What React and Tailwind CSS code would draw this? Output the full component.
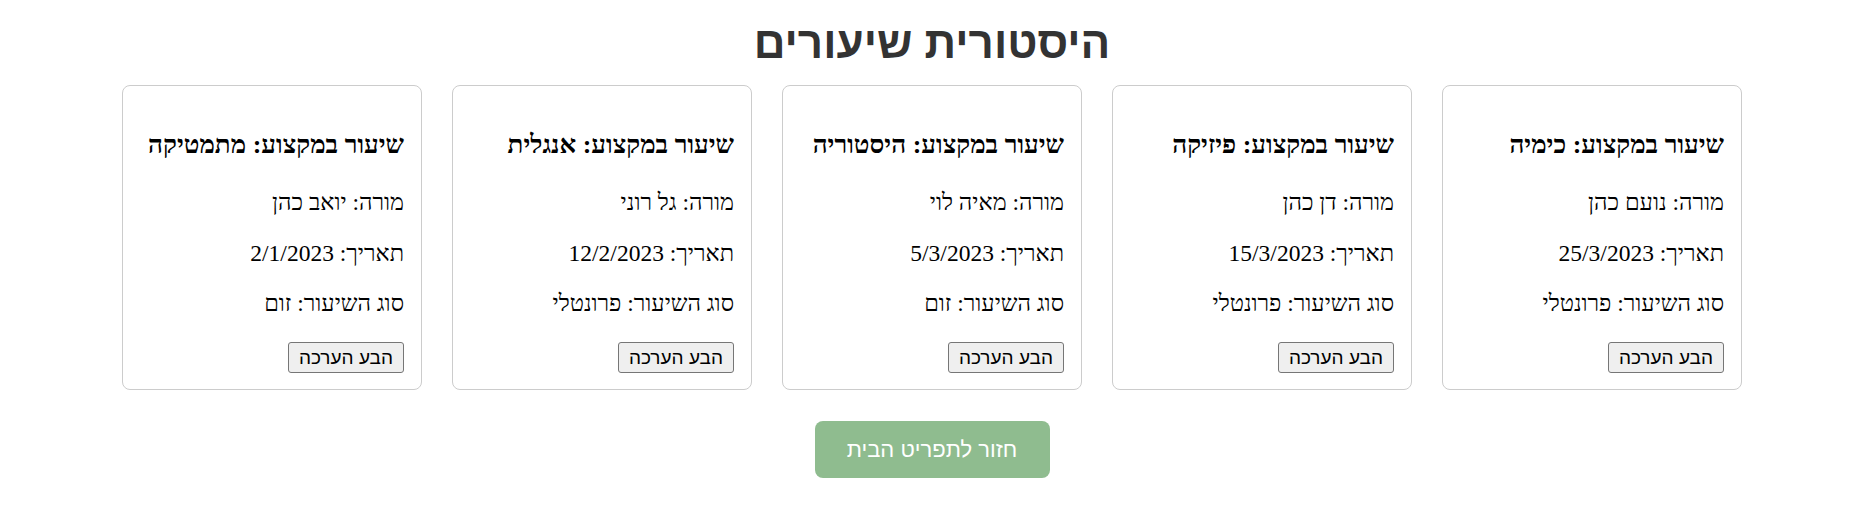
import React from "react";

const lessons = [
  { subject: "כימיה", teacher: "נועם כהן", date: "25/3/2023", type: "פרונטלי" },
  { subject: "פיזיקה", teacher: "דן כהן", date: "15/3/2023", type: "פרונטלי" },
  { subject: "היסטוריה", teacher: "מאיה לוי", date: "5/3/2023", type: "זום" },
  { subject: "אנגלית", teacher: "גל רוני", date: "12/2/2023", type: "פרונטלי" },
  { subject: "מתמטיקה", teacher: "יואב כהן", date: "2/1/2023", type: "זום" },
];

function Card({ l }) {
  return (
    <div className="w-[300px] mx-[15px] border border-[#cccccc] rounded-[8px] pt-[43px] pb-[16px] px-[17px] text-right font-['Liberation_Serif',serif] text-black">
      <h3 className="text-[26px] leading-[31px] font-bold whitespace-nowrap">שיעור במקצוע: {l.subject}</h3>
      <p className="mt-[29px] text-[23.5px] leading-[27px]">מורה: {l.teacher}</p>
      <p className="mt-[23.7px] text-[23.5px] leading-[27px]">תאריך: {l.date}</p>
      <p className="mt-[23.7px] text-[23.5px] leading-[27px]">סוג השיעור: {l.type}</p>
      <div className="mt-[25px]">
        <button className="h-[31px] px-[10px] bg-[#efefef] border border-[#767676] rounded-[3px] text-[19px] leading-[20px] font-['Liberation_Sans',sans-serif] text-black">
          הבע הערכה
        </button>
      </div>
    </div>
  );
}

export default function App() {
  return (
    <div dir="rtl" className="w-full min-h-[506px] bg-white flex flex-col items-center">
      <h1 className="mt-[18px] text-[44px] leading-[50px] font-bold text-[#333333] font-['Liberation_Sans',sans-serif]">
        היסטורית שיעורים
      </h1>
      <div className="mt-[17px] flex flex-wrap justify-center">
        {lessons.map((l, i) => (
          <Card key={i} l={l} />
        ))}
      </div>
      <button className="mt-[31px] w-[235px] h-[57px] bg-[#8fbc8f] rounded-[8px] text-white text-[22px] font-['Liberation_Sans',sans-serif]">
        חזור לתפריט הבית
      </button>
    </div>
  );
}
